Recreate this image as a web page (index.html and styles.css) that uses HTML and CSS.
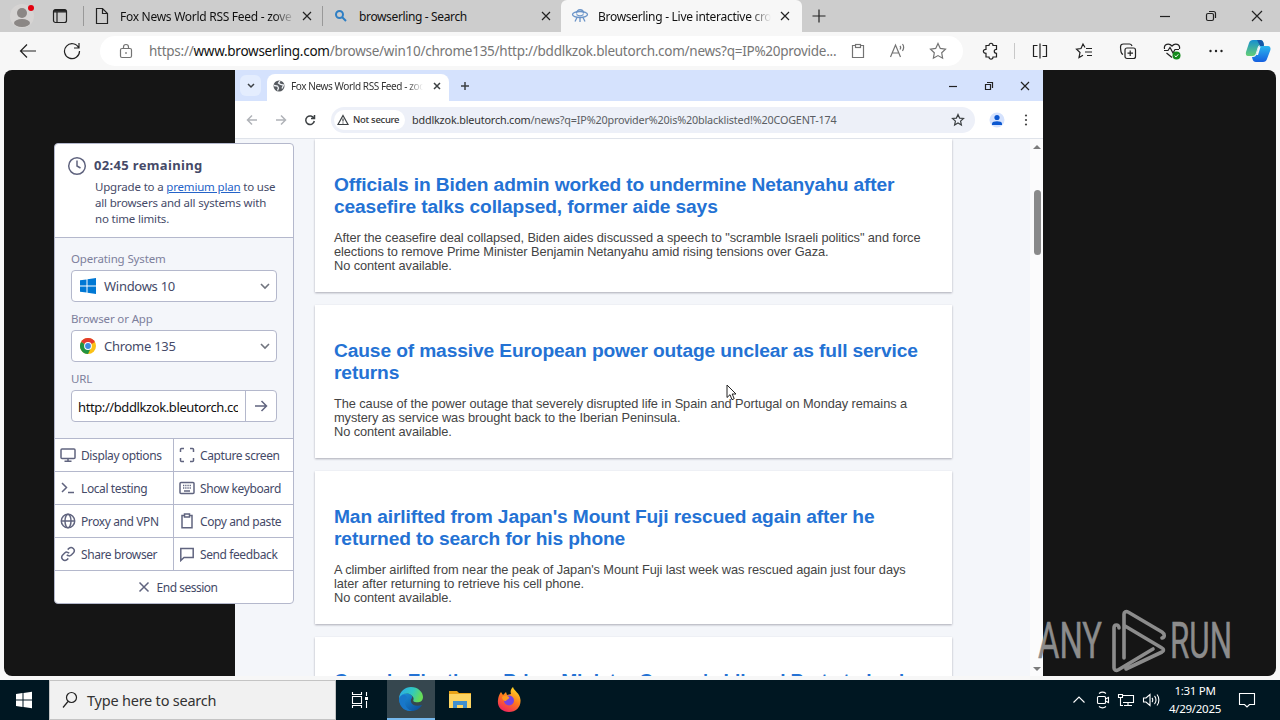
FILE: index.html
```html
<!DOCTYPE html>
<html lang="en">
<head>
  <meta charset="UTF-8" />
  <meta name="viewport" content="width=device-width, initial-scale=1.0"/>
  <title>Browserling - Live interactive cross-browser testing</title>
  <link rel="stylesheet" href="styles.css">
</head>
<body>

  <!-- Edge tab strip -->
  <header class="tabs">
    <div class="tabs-lead">
      <svg class="profile" width="26" height="26" viewBox="0 0 26 26"><circle cx="13" cy="13" r="12" fill="#d6d4d3"/><circle cx="13" cy="10" r="5" fill="#8b8785"/><ellipse cx="13" cy="20" rx="8" ry="4" fill="#8b8785"/><circle cx="22" cy="5" r="3" fill="#e3000f"/></svg>
      <svg class="ln workspaces" width="16" height="16" viewBox="0 0 16 16"><rect x="1.5" y="1.5" width="13" height="13" rx="2"/><path d="M1.5 4h13M5 4v10"/><path d="M2 2.8h12" stroke-width="2"/></svg>
    </div>
    <div class="tab">
      <svg class="ln" width="16" height="18" viewBox="0 0 16 18"><path d="M2.5 1.5h6l5 5v10h-11zM8.500 1.500v5h5"/></svg>
      <span class="tab-text fade">Fox News World RSS Feed - zove</span>
      <svg class="ln" width="10" height="10" viewBox="0 0 10 10"><path d="M1 1l8 8M9 1l-8 8"/></svg>
    </div>
    <div class="tab">
      <svg class="find" width="16" height="16" viewBox="0 0 16 16"><circle cx="6.500" cy="6.500" r="3.500"/><path d="M9 9l4 4"/></svg>
      <span class="tab-text second">browserling - Search</span>
      <svg class="ln" width="10" height="10" viewBox="0 0 10 10"><path d="M1 1l8 8M9 1l-8 8"/></svg>
    </div>
    <div class="tab active">
      <svg class="ufo" width="18" height="16" viewBox="0 0 18 16"><ellipse cx="9" cy="6.500" rx="7.500" ry="3"/><path d="M5.500 5.500c0-5 7-5 7 0M5.500 6.500c2 1.500 5 1.500 7 0M6 9.500l-2 4M9 9.500v4.500M12 9.500l2 4"/></svg>
      <span class="tab-text third fade">Browserling - Live interactive cro</span>
      <svg class="ln" width="10" height="10" viewBox="0 0 10 10"><path d="M1 1l8 8M9 1l-8 8"/></svg>
    </div>
    <div class="new-tab"><svg class="ln" width="14" height="14" viewBox="0 0 14 14"><path d="M7 .5v13M.5 7h13"/></svg></div>
    <div class="win-buttons">
      <svg class="ln" width="12" height="12" viewBox="0 0 12 12"><path d="M1 6.500h10"/></svg>
      <svg class="ln" width="12" height="12" viewBox="0 0 12 12"><rect x="1.500" y="3.500" width="7" height="7" rx="1.500"/><path d="M4 1.500h4.500a2 2 0 0 1 2 2V8"/></svg>
      <svg class="ln" width="12" height="12" viewBox="0 0 12 12"><path d="M1 1l10 10M11 1L1 11"/></svg>
    </div>
  </header>

  <!-- Edge toolbar -->
  <nav class="toolbar">
    <div class="nav-buttons">
      <svg class="ln" width="18" height="16" viewBox="0 0 18 16"><path d="M17 8H1.500M8 1.500L1.500 8 8 14.500"/></svg>
      <svg class="ln" width="18" height="18" viewBox="0 0 18 18"><path d="M15.800 6A7.500 7.500 0 1 0 16.500 9M16 1v5h-5"/></svg>
    </div>
    <div class="address">
      <svg class="ln gray" width="14" height="16" viewBox="0 0 14 16"><rect x="1.500" y="5.500" width="11" height="9" rx="1.500"/><path d="M4.500 5.500V4a2.500 2.500 0 0 1 5 0v1.500M7 9v2"/></svg>
      <span class="address-text">https://<b>www.browserling.com</b>/browse/win10/chrome135/http://bddlkzok.bleutorch.com/news?q=IP%20provide...</span>
      <div class="address-icons">
        <svg class="ln gray clip" width="14" height="16" viewBox="0 0 14 16"><path d="M4 2.500H1.500v12h11v-12H10"/><rect x="4.500" y="1.500" width="5" height="3"/></svg>
        <svg class="ln gray" width="18" height="18" viewBox="0 0 18 18"><path d="M1.500 15L6.500 3l5 12M3.200 11h6.600M11 4c1 1 1 2 0 3.500M13.500 2c1.500 2 1.500 4.500 0 7"/></svg>
        <svg class="ln gray" width="18" height="18" viewBox="0 0 18 18"><path d="M9 1.500l2.300 4.900 5.200.7-3.800 3.700.9 5.400L9 13.600l-4.600 2.600.9-5.400-3.800-3.700 5.200-.7z"/></svg>
      </div>
    </div>
    <div class="tool-icons">
      <svg class="ln" width="18" height="18" viewBox="0 0 18 18"><path d="M4 3.500h3c0-3 4-3 4 0h3.500v3.800c-3 0-3 4 0 4v3.700H11c0 2.800-4 2.800-4 0H4v-3.700c-3.500 0-3.500-4 0-4z"/></svg>
      <i class="sep"></i>
      <svg class="ln" width="18" height="18" viewBox="0 0 18 18"><path d="M6.500 3.500h-4v11h4M11.500 3.500h4v11h-4M9 1.500v15"/></svg>
      <svg class="ln" width="18" height="18" viewBox="0 0 18 18"><path d="M10 5.500L8 2 6 6.500l-4.500.7L5 10.500 4 15.500l4-2.200M11 6.500h6M10 10h7M12 13.500h5"/></svg>
      <svg class="ln" width="18" height="18" viewBox="0 0 18 18"><rect x="6" y="6" width="10.500" height="10.500" rx="2"/><path d="M11.200 8.500v5.500M8.500 11.200H14M4 12.500C1.500 11.500 2 10 1.500 5c0-2 1-3 3-3h6c2 0 2 1 2.500 2"/></svg>
      <svg width="18" height="18" viewBox="0 0 18 18"><path class="ln" d="M1.500 7C.5 2 6 .5 9 4c3-3.500 8.500-2 7.500 3M3.500 11L9 15.500M1 8.500h4l2-3 3 5.500 2-3.500h4"/><circle cx="13.500" cy="13.500" r="4" fill="#138a1b"/><path d="M11.700 13.600l1.300 1.300 2.300-2.600" fill="none" stroke="#fff"/></svg>
      <svg width="18" height="18" viewBox="0 0 18 18"><g fill="#222"><circle cx="3.500" cy="9" r="1.200"/><circle cx="9" cy="9" r="1.200"/><circle cx="14.500" cy="9" r="1.200"/></g></svg>
    </div>
    <svg class="copilot" width="26" height="24" viewBox="0 0 26 24">
      <defs>
        <linearGradient id="cp1" x1="0" y1="0" x2="0" y2="1"><stop offset="0" stop-color="#168fd0"/><stop offset="1" stop-color="#65cf76"/></linearGradient>
        <linearGradient id="cp2" x1="0" y1="0" x2="0" y2="1"><stop offset="0" stop-color="#2bb7ee"/><stop offset="1" stop-color="#155fe0"/></linearGradient>
      </defs>
      <path fill="url(#cp1)" d="M8 1h7c2 0 3 1 3.500 3l.5 2h-3c-2 0-3 1-3.500 3l-1.500 5c-.5 2-1.500 3-3.500 3H3C1 17 .5 15 1 13L4 4c.6-2 2-3 4-3z"/>
      <path fill="url(#cp2)" d="M18 23h-7c-2 0-3-1-3.500-3L7 18h1c2 0 3-1 3.500-3L13 10c.5-2 1.500-3 3.500-3H23c2 0 3 2 2.400 4L22 20c-.6 2-2 3-4 3z"/>
      <path fill="#1558a8" d="M12 1h3c2 0 3 1 3.500 3l.5 3h-4z"/>
      <path fill="#f7f7f7" d="M13.500 8h2l-2.500 8h-2z"/>
    </svg>
  </nav>

  <main class="stage">
    <!-- remote Chrome session -->
    <section class="chrome">
      <div class="chrome-tabs">
        <div class="tab-search"><svg class="bold" width="8" height="6" viewBox="0 0 8 6"><path d="M1 1l3 3 3-3"/></svg></div>
        <div class="chrome-tab">
          <svg width="12" height="12" viewBox="0 0 12 12"><circle cx="6" cy="6" r="5.500" fill="#565a5f"/><path d="M1 5.500l3.500.5 1 2-1 2.500M7 1L5.500 3l2 1.500L10.500 5 9 8.500" fill="none" stroke="#eef1f5" stroke-width="1.300"/></svg>
          <span class="chrome-tab-text fade">Fox News World RSS Feed - zoo</span>
          <svg class="bold" width="8" height="8" viewBox="0 0 8 8"><path d="M1 1l6 6M7 1L1 7"/></svg>
        </div>
        <svg class="bold plus" width="10" height="10" viewBox="0 0 10 10"><path d="M5 1v8M1 5h8"/></svg>
        <div class="chrome-win">
          <svg class="ln" width="10" height="10" viewBox="0 0 10 10"><path d="M1 5.500h8"/></svg>
          <svg class="ln" width="10" height="10" viewBox="0 0 10 10"><path d="M1.500 3.500h5v5h-5zM3 1.500h5.500V7"/></svg>
          <svg class="ln" width="10" height="10" viewBox="0 0 10 10"><path d="M1 1l8 8M9 1L1 9"/></svg>
        </div>
      </div>
      <div class="chrome-bar">
        <div class="chrome-nav">
          <svg class="bold dim" width="12" height="12" viewBox="0 0 12 12"><path d="M11 6H2M6 1.500L1.500 6 6 10.500"/></svg>
          <svg class="bold dim" width="12" height="12" viewBox="0 0 12 12"><path d="M1 6h9M6 1.500L10.500 6 6 10.500"/></svg>
          <svg class="bold" width="12" height="12" viewBox="0 0 12 12"><path d="M10 4.500A4.300 4.300 0 1 0 10.300 7M10.500 1v3.500H7"/></svg>
        </div>
        <div class="chrome-url">
          <div class="not-secure">
            <svg class="bold thin" width="12" height="12" viewBox="0 0 12 12"><path d="M6 1.500L11 10.500H1zM6 4.500v3M6 8.500v1"/></svg>
            <span>Not secure</span>
          </div>
          <span class="chrome-url-text">bddlkzok.bleutorch.com<em>/news?q=IP%20provider%20is%20blacklisted!%20COGENT-174</em></span>
          <svg class="bold thin" width="14" height="14" viewBox="0 0 14 14"><path d="M7 1.500l1.600 3.600 3.900.4-2.900 2.600.8 3.900L7 10l-3.400 2 .8-3.900-2.900-2.600 3.900-.4z"/></svg>
        </div>
        <svg class="avatar" width="16" height="16" viewBox="0 0 16 16"><circle cx="8" cy="8" r="7.500" fill="#d5e2fd"/><circle cx="8" cy="5.500" r="2.600" fill="#0b57d0"/><path d="M3 13v-1.500c0-3 10-3 10 0V13z" fill="#0b57d0"/></svg>
        <svg width="4" height="14" viewBox="0 0 4 14"><g fill="#444"><circle cx="2" cy="2.500" r="1.100"/><circle cx="2" cy="7" r="1.100"/><circle cx="2" cy="11.500" r="1.100"/></g></svg>
      </div>
      <div class="feed">
        <div class="feed-list">
          <article class="card">
            <h2>Officials in Biden admin worked to undermine Netanyahu after<br>ceasefire talks collapsed, former aide says</h2>
            <p>After the ceasefire deal collapsed, Biden aides discussed a speech to "scramble Israeli politics" and force<br>elections to remove Prime Minister Benjamin Netanyahu amid rising tensions over Gaza.<br>No content available.</p>
          </article>
          <article class="card">
            <h2>Cause of massive European power outage unclear as full service<br>returns</h2>
            <p>The cause of the power outage that severely disrupted life in Spain and Portugal on Monday remains a<br>mystery as service was brought back to the Iberian Peninsula.<br>No content available.</p>
          </article>
          <article class="card">
            <h2>Man airlifted from Japan's Mount Fuji rescued again after he<br>returned to search for his phone</h2>
            <p>A climber airlifted from near the peak of Japan's Mount Fuji last week was rescued again just four days<br>later after returning to retrieve his cell phone.<br>No content available.</p>
          </article>
          <article class="card last">
            <h2>Canada Elections: Prime Minister Carney's Liberal Party to lead</h2>
          </article>
        </div>
        <div class="scrollbar">
          <svg width="8" height="5" viewBox="0 0 8 5"><path d="M0 5l4-4 4 4z" fill="#7c7c7c"/></svg>
          <div class="thumb"></div>
          <svg width="8" height="5" viewBox="0 0 8 5"><path d="M0 0l4 4 4-4z" fill="#7c7c7c"/></svg>
        </div>
      </div>
    </section>

    <!-- session panel floats over the stage -->
    <aside class="panel">
      <div class="timer">
        <svg class="pi" width="20" height="20" viewBox="0 0 20 20"><circle cx="10" cy="10" r="8.300"/><path d="M10 4.500V10l3.500 2"/></svg>
        <div>
          <h3>02:45 remaining</h3>
          <p>Upgrade to a <a href="#">premium plan</a> to use<br>all browsers and all systems with<br>no time limits.</p>
        </div>
      </div>
      <form class="setup">
        <label>Operating System</label>
        <div class="select">
          <svg width="16" height="16" viewBox="0 0 16 16"><path fill="#0078d4" d="M0 2.300L6.500 1.400v6.100H0zM7.500 1.200L16 0v7.500H7.500zM0 8.500h6.500v6.100L0 13.700zM7.500 8.500H16V16l-8.500-1.200z"/></svg>
          <span>Windows 10</span>
          <svg class="caret" width="10" height="7" viewBox="0 0 10 7"><path d="M1 1l4 4 4-4"/></svg>
        </div>
        <label>Browser or App</label>
        <div class="select">
          <svg width="16" height="16" viewBox="0 0 16 16"><circle cx="8" cy="8" r="8" fill="#fbc116"/><path fill="#e33b2e" d="M8 8L1.070 4A8 8 0 0 1 14.930 4z"/><path fill="#229342" d="M1.070 4A8 8 0 0 0 8 16l3-6.200L8 8z"/><circle cx="8" cy="8" r="3.900" fill="#fff"/><circle cx="8" cy="8" r="2.900" fill="#3d8ae0"/></svg>
          <span>Chrome 135</span>
          <svg class="caret" width="10" height="7" viewBox="0 0 10 7"><path d="M1 1l4 4 4-4"/></svg>
        </div>
        <label>URL</label>
        <div class="url-row">
          <span class="url-value">http://bddlkzok.bleutorch.co</span>
          <span class="go"><svg class="pi" width="14" height="12" viewBox="0 0 14 12"><path d="M1 6h11.500M7.500 1l5 5-5 5"/></svg></span>
        </div>
      </form>
      <div class="actions">
        <div><svg class="pi" width="16" height="16" viewBox="0 0 16 16"><rect x="1" y="2" width="14" height="9.500" rx="1"/><path d="M8 12v2M4.500 14.300h7"/></svg>Display options</div>
        <div><svg class="pi" width="16" height="16" viewBox="0 0 16 16"><path d="M1.500 5V2.500a1 1 0 0 1 1-1H5M11 1.500h2.500a1 1 0 0 1 1 1V5M14.500 11v2.500a1 1 0 0 1-1 1H11M5 14.500H2.500a1 1 0 0 1-1-1V11"/></svg>Capture screen</div>
        <div><svg class="pi" width="16" height="16" viewBox="0 0 16 16"><path d="M2 3l4.500 4.500L2 12M8 12.500h6"/></svg>Local testing</div>
        <div><svg class="pi" width="16" height="16" viewBox="0 0 16 16"><rect x="1" y="2.500" width="14" height="11" rx="1"/><path d="M4 5.500h8M4 8h8" stroke-dasharray="1.300 .9"/><path d="M5 11h6"/></svg>Show keyboard</div>
        <div><svg class="pi" width="16" height="16" viewBox="0 0 16 16"><circle cx="8" cy="8" r="6.700"/><ellipse cx="8" cy="8" rx="3" ry="6.700"/><path d="M1.500 8h13"/></svg>Proxy and VPN</div>
        <div><svg class="pi" width="16" height="16" viewBox="0 0 16 16"><path d="M5 2.500H3v12.300h10V2.500h-2"/><rect x="5.500" y="1" width="5" height="3"/></svg>Copy and paste</div>
        <div><svg class="pi" width="16" height="16" viewBox="0 0 16 16"><path d="M6.800 8.700a3 3 0 0 0 4.500.3l2.200-2.200a3.200 3.200 0 0 0-4.500-4.500L7.700 3.600M9.200 7.300a3 3 0 0 0-4.500-.3L2.500 9.200A3.200 3.200 0 0 0 7 13.700l1.300-1.300"/></svg>Share browser</div>
        <div><svg class="pi" width="16" height="16" viewBox="0 0 16 16"><path d="M1.800 2.500h12.400v9H5l-3.200 3z"/></svg>Send feedback</div>
      </div>
      <div class="end"><svg class="pi" width="12" height="12" viewBox="0 0 12 12"><path d="M1.500 1.500l9 9M10.500 1.500l-9 9"/></svg>End session</div>
    </aside>

    <!-- mouse pointer -->
    <svg class="pointer" width="12" height="18" viewBox="0 0 12 18"><path d="M1 1v12.500l3-2.800 2 5 2.200-1-2-4.700H10z" fill="#fff" stroke="#222"/></svg>

    <!-- watermark -->
    <svg class="watermark" width="204" height="66" viewBox="0 0 204 66">
      <text x="1" y="50" textLength="64" lengthAdjust="spacingAndGlyphs">ANY</text>
      <g fill="none" stroke="#8c8c8c" stroke-width="3.600" stroke-linejoin="round" stroke-linecap="round">
        <path d="M82 20c0-4-5-4-5 0v40c0 2 2 3 4 2l35-21M87 50V6c0-2 2-3 4-2l34 20c3 2 3 5 0 6M88 18l37 22c2 1 2 3 0 4L89 61"/>
      </g>
      <text x="133" y="50" textLength="62" lengthAdjust="spacingAndGlyphs">RUN</text>
    </svg>
  </main>

  <!-- Windows taskbar -->
  <footer class="taskbar">
    <div class="start"><svg width="18" height="18" viewBox="0 0 18 18"><path fill="#fff" d="M1 3l6.500-1v6.500H1zM8.500 1.900L17 .8v7.700H8.500zM1 9.500h6.500V16L1 15zM8.500 9.500H17v7.700l-8.500-1.100z"/></svg></div>
    <div class="search"><svg class="ln" width="16" height="18" viewBox="0 0 16 18"><circle cx="9.500" cy="6.500" r="5"/><path d="M6 10.500L1 16.500"/></svg><span>Type here to search</span></div>
    <div class="app task-view"><svg class="wh" width="18" height="18" viewBox="0 0 18 18"><path d="M1.500 1v2.500h9V1M1.500 17v-2.500h9V17M1.500 5.500h9v7h-9zM15.500 1v4M15.500 10v7"/><path d="M14 7.500h3" stroke-width="3"/></svg></div>
    <div class="app current">
      <svg width="26" height="26" viewBox="0 0 26 26">
        <defs>
          <linearGradient id="eg1" x1="0" y1="0" x2="1" y2=".3"><stop offset="0" stop-color="#2aa7ee"/><stop offset=".6" stop-color="#30c8c0"/><stop offset="1" stop-color="#65dc58"/></linearGradient>
          <linearGradient id="eg2" x1="0" y1="0" x2="1" y2="1"><stop offset="0" stop-color="#1b94e0"/><stop offset="1" stop-color="#0d4a96"/></linearGradient>
        </defs>
        <path fill="url(#eg2)" d="M1 12c2-6 10-6 13-2 1 2-2 3-1 6s5 5 11 3c-3 5-8 6.500-12 6C5 24 1 19 1 12z"/>
        <path fill="#1877c9" d="M9 11c-4 4-2 12 5 14C6 26 1 20 1 12c2-4 6-4 8-1z"/>
        <path fill="url(#eg1)" d="M1 12C2 5 7 1 13 1c7 0 12 5 12 10 0 5-5 6-8 5-3-.8-1-2-1.500-4C14 7 5 5 1 12z"/>
      </svg>
    </div>
    <div class="app"><svg width="22" height="20" viewBox="0 0 22 20"><path fill="#e8a317" d="M0 1h8l2 2h12v4H0z"/><path fill="#fcd462" d="M0 4h22v14H0z"/><path fill="#3f8fd0" d="M4 11h14v7h-4v-3H8v3H4z"/></svg></div>
    <div class="app">
      <svg width="24" height="26" viewBox="0 0 24 26">
        <defs><linearGradient id="ff" x1=".8" y1="0" x2=".3" y2="1"><stop offset="0" stop-color="#ffe226"/><stop offset=".5" stop-color="#ff7a1c"/><stop offset="1" stop-color="#f0245e"/></linearGradient></defs>
        <path fill="url(#ff)" d="M4 5l2 3 3-3 1 3 4-1c-1-3 0-5 2-7 1 4 7 6 7.500 13C24 20 19 25 12 25S0 20 1 13c.3-3 1-5 3-8z"/>
        <circle cx="12" cy="13.500" r="5" fill="#7543e3"/><path fill="#ff9a20" d="M5 10c3-2 5-1 7 0 1 2-2 2-3 4-3 0-4-2-4-4z"/>
      </svg>
    </div>
    <div class="tray">
      <svg class="wh up" width="14" height="14" viewBox="0 0 14 14"><path d="M1.500 9.500L7 4l5.500 5.500"/></svg>
      <svg class="wh" width="14" height="18" viewBox="0 0 14 18"><rect x="1.500" y="5.500" width="8" height="7" rx="1"/><path d="M9.500 8l3-1.500v5l-3-1.500M3 2.500c2-1.500 5-1.500 7 0M3 15.500c2 1.500 5 1.500 7 0"/></svg>
      <svg class="wh" width="18" height="16" viewBox="0 0 18 16"><path d="M6 3.500h10.500v7H6M11 10.500v3M7 13.500h8M1.500 2.500h4v3h-4zM3.500 5.500v8H6"/></svg>
      <svg class="wh" width="18" height="16" viewBox="0 0 18 16"><path d="M1.500 6v4H4l4 3.500v-11L4 6zM10 6c1 1 1 3 0 4M12.500 4c2 2 2 6 0 8M15 2.500c2.500 3 2.500 8 0 11"/></svg>
      <div class="clock"><span>1:31 PM</span><span>4/29/2025</span></div>
      <svg class="wh" width="18" height="18" viewBox="0 0 18 18"><path d="M1.500 2.500h15v11h-5L9 16l-2.500-2.500h-5z"/></svg>
    </div>
  </footer>

</body>
</html>
```
FILE: styles.css
```css
* {
  box-sizing: border-box;
}
body {
  font-family: "Noto Sans", "Open Sans", sans-serif;
  margin: 0;
  width: 1280px;
  height: 720px;
  overflow: hidden;
  background: #f7f7f7;
  display: flex;
  flex-direction: column;
}
svg {
  flex: none;
  display: block;
}
span {
  white-space: nowrap;
}
.ln {
  fill: none;
  stroke: #222;
  stroke-width: 1.2;
}
.gray {
  stroke: #737373;
}
.bold {
  fill: none;
  stroke: #3c4043;
  stroke-width: 1.5;
}
.thin {
  stroke-width: 1.2;
}
.dim {
  stroke: #b0b3b8;
}
.wh {
  fill: none;
  stroke: #fff;
  stroke-width: 1.1;
}
.fade {
  -webkit-mask-image: linear-gradient(to right, #000 88%, transparent);
  mask-image: linear-gradient(to right, #000 88%, transparent);
}

/* Edge tab strip */
.tabs {
  height: 32px;
  flex: none;
  background: #cdcdcd;
  display: flex;
}
.tabs-lead {
  width: 83px;
  display: flex;
  align-items: center;
  padding-left: 9px;
  gap: 17px;
}
.tab {
  width: 239px;
  background: linear-gradient(#999, #999) 0 6px / 1px 20px no-repeat #cdcdcd;
  display: flex;
  align-items: center;
  padding: 0 10px 0 11px;
}
.tab-text {
  font-size: 12px;
  color: #111;
  width: 175px;
  margin: 0 7px 0 10px;
  letter-spacing: -0.28px;
}
.tab-text.second {
  width: 181px;
  margin: 0 1px 0 10px;
  letter-spacing: -0.36px;
}
.tab.active {
  width: 241px;
  background: #f7f7f7;
  border-radius: 6px 6px 0 0;
  padding: 0 10px;
}
.tab-text.third {
  width: 173px;
  margin: 0 9px 0 9px;
}
.find {
  fill: none;
  stroke: #2f7fc4;
  stroke-width: 2;
}
.ufo {
  fill: none;
  stroke: #6b94c8;
  stroke-width: 1.3;
}
.new-tab {
  width: 34px;
  display: flex;
  align-items: center;
  justify-content: center;
}
.win-buttons {
  margin-left: auto;
  display: flex;
  align-items: center;
}
.win-buttons svg {
  margin: 0 17px;
}

/* Edge toolbar */
.toolbar {
  height: 38px;
  flex: none;
  background: #f7f7f7;
  display: flex;
  align-items: center;
}
.nav-buttons {
  width: 100px;
  display: flex;
  padding-left: 19px;
  gap: 26px;
  align-items: center;
}
.address {
  width: 863px;
  height: 30px;
  border-radius: 15px;
  background: #fff;
  display: flex;
  align-items: center;
  padding: 0 16px 0 19px;
}
.address-text {
  font-size: 13.500px;
  letter-spacing: -0.26px;
  color: #767676;
  margin-left: 16px;
}
.address-text b {
  font-weight: normal;
  color: #111;
}
.address-icons {
  margin-left: auto;
  display: flex;
  align-items: center;
  gap: 22px;
}
.clip {
  margin-right: 2px;
}
.tool-icons {
  display: flex;
  align-items: center;
  padding-left: 19px;
  gap: 26px;
}
.sep {
  width: 1px;
  height: 16px;
  background: #c8c8c8;
  margin: 0 -10px 0 -12px;
}
.copilot {
  margin-left: auto;
  margin-right: 9px;
}

/* page area */
.stage {
  position: relative;
  height: 606px;
  flex: none;
  margin: 0 4px 4px;
  background: #151515;
  border-radius: 8px;
}
.chrome {
  width: 808px;
  height: 606px;
  margin-left: 231px;
  background: #fff;
  display: flex;
  flex-direction: column;
}
.chrome-tabs {
  height: 31px;
  flex: none;
  background: #d5e2fd;
  display: flex;
  align-items: center;
  padding-left: 5px;
}
.tab-search {
  width: 21px;
  height: 21px;
  border-radius: 6px;
  background: #e4edfe;
  display: flex;
  align-items: center;
  justify-content: center;
}
.chrome-tab {
  width: 182px;
  height: 27px;
  align-self: flex-end;
  margin-left: 6px;
  background: #fff;
  border-radius: 8px 8px 0 0;
  display: flex;
  align-items: center;
  padding: 0 0 3px 6px;
}
.chrome-tab-text {
  font-size: 10px;
  letter-spacing: -0.4px;
  color: #333;
  width: 132px;
  margin: 0 10px 0 6px;
}
.plus {
  margin-left: 11px;
}
.chrome-win {
  margin-left: auto;
  margin-right: 13px;
  display: flex;
  gap: 26px;
}
.chrome-bar {
  height: 38px;
  flex: none;
  border-bottom: 1px solid #dfe3ea;
  display: flex;
  align-items: center;
}
.chrome-nav {
  width: 96px;
  display: flex;
  gap: 17px;
  padding-left: 11px;
}
.chrome-url {
  width: 644px;
  height: 26px;
  border-radius: 13px;
  background: #edf0f8;
  display: flex;
  align-items: center;
  padding: 0 10px 0 3px;
}
.not-secure {
  width: 71px;
  height: 20px;
  border-radius: 10px;
  background: #fff;
  display: flex;
  align-items: center;
  gap: 4px;
  padding-left: 3px;
  font-size: 9.500px;
  font-weight: 500;
  letter-spacing: -0.3px;
  color: #333;
}
.chrome-url-text {
  font-size: 10.800px;
  letter-spacing: -0.17px;
  color: #333;
  margin-left: 7px;
  margin-right: auto;
}
.chrome-url-text em {
  font-style: normal;
  color: #5a5d62;
}
.avatar {
  margin: 0 19px 0 14px;
}

/* news feed */
.feed {
  flex: 1;
  min-height: 0;
  display: flex;
  background: #f4f6fa;
  font-family: "Liberation Sans", Arial, sans-serif;
}
.feed-list {
  flex: 1;
  padding-left: 80px;
  overflow: hidden;
}
.card {
  width: 637px;
  height: 153px;
  margin: 0 0 13px;
  padding: 35px 19px 0;
  background: #fff;
  box-shadow: 0 1px 2px rgba(60, 60, 80, 0.4);
  white-space: nowrap;
}
.card.last {
  padding-top: 33px;
}
.card h2 {
  margin: 0;
  font-size: 19.200px;
  letter-spacing: -0.13px;
  line-height: 22px;
  color: #2472d4;
}
.card p {
  margin: 13px 0 0;
  font-size: 12.800px;
  letter-spacing: -0.082px;
  line-height: 14.200px;
  color: #444;
}
.scrollbar {
  width: 13px;
  background: #fbfbfc;
  display: flex;
  flex-direction: column;
  align-items: center;
  padding: 5px 0 4px 1px;
}
.thumb {
  width: 7px;
  height: 65px;
  border-radius: 4px;
  background: #8a8a8a;
  margin: 41px 0 auto;
}

/* session panel */
.panel {
  position: absolute;
  left: 50px;
  top: 73px;
  width: 240px;
  height: 461px;
  border: 1px solid #b4b8cc;
  border-radius: 4px;
  background: #fff;
  overflow: hidden;
  color: #454a68;
  font-size: 12px;
}
.pi {
  fill: none;
  stroke: #60647f;
  stroke-width: 1.5;
}
.timer {
  height: 94px;
  display: flex;
  padding: 12px 0 0 12px;
  gap: 8px;
  border-bottom: 1px solid #b4b8cc;
  white-space: nowrap;
}
.timer h3 {
  margin: -1px 0 0 -1px;
  font-size: 13px;
  letter-spacing: 0.34px;
  line-height: 20px;
}
.timer p {
  margin: 4px 0 0;
  font-size: 11.500px;
  letter-spacing: -0.18px;
  line-height: 16px;
}
.timer a {
  color: #2563c8;
}
.setup {
  height: 201px;
  padding: 12px 16px 0;
  background: #f4f6fa;
  border-bottom: 1px solid #b4b8cc;
}
.setup label {
  display: block;
  height: 20px;
  line-height: 18px;
  color: #7d809c;
  font-size: 11.500px;
  letter-spacing: -0.14px;
}
.select,
.url-row {
  height: 32px;
  margin-bottom: 8px;
  border: 1px solid #b4b8cc;
  border-radius: 4px;
  background: #fff;
  display: flex;
  align-items: center;
  font-size: 13px;
}
.select {
  padding: 0 6px 0 8px;
}
.select span {
  margin: 0 auto 0 8px;
  letter-spacing: -0.28px;
}
.caret {
  fill: none;
  stroke: #71757f;
  stroke-width: 1.6;
}
.url-value {
  width: 160px;
  margin: 1px 7px 0 6px;
  overflow: hidden;
  letter-spacing: -0.4px;
  color: #111;
}
.go {
  flex: 1;
  height: 30px;
  border-left: 1px solid #b4b8cc;
  display: flex;
  align-items: center;
  justify-content: center;
}
.actions {
  display: grid;
  grid-template-columns: 119px 119px;
  grid-auto-rows: 33px;
}
.actions div {
  display: flex;
  align-items: center;
  gap: 5px;
  padding-left: 5px;
  white-space: nowrap;
  letter-spacing: -0.4px;
  border-bottom: 1px solid #b4b8cc;
}
.actions div:nth-child(odd) {
  border-right: 1px solid #b4b8cc;
}
.end {
  height: 32px;
  display: flex;
  align-items: center;
  justify-content: center;
  gap: 7px;
  padding-left: 7px;
  letter-spacing: -0.5px;
}
.pointer {
  position: absolute;
  left: 722px;
  top: 314px;
}
.watermark {
  position: absolute;
  left: 1033px;
  top: 538px;
}
.watermark text {
  font-family: Roboto, sans-serif;
  font-size: 50px;
  fill: #8c8c8c;
  stroke: #8c8c8c;
  stroke-width: 0.5;
}

/* taskbar */
.taskbar {
  height: 40px;
  flex: none;
  background: #001722;
  display: flex;
}
.start {
  width: 49px;
  display: flex;
  align-items: center;
  padding-left: 15px;
}
.search {
  width: 287px;
  background: #f1f1f1;
  border: 1px solid #c4c4c4;
  display: flex;
  align-items: center;
  padding-left: 12px;
  gap: 9px;
  font-size: 14.500px;
  letter-spacing: -0.22px;
  color: #333;
}
.app {
  width: 49px;
  display: flex;
  align-items: center;
  justify-content: center;
}
.app.task-view {
  width: 51px;
  padding-right: 3px;
}
.app.current {
  width: 48px;
  background: #36474f;
  border-bottom: 2px solid #76b9ed;
}
.tray {
  margin-left: auto;
  padding-right: 24px;
  display: flex;
  align-items: center;
  gap: 7px;
}
.up {
  margin-right: 3px;
}
.clock {
  width: 54px;
  margin: 0 9px 0 1px;
  display: flex;
  flex-direction: column;
  align-items: center;
  font-size: 11.500px;
  letter-spacing: -0.3px;
  line-height: 18px;
  color: #fff;
}
```
